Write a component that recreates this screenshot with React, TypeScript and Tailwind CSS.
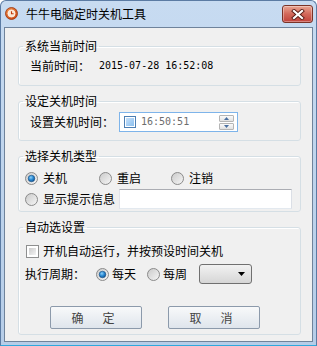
import React from 'react';

const Radio = ({ checked }: { checked?: boolean }) => (
  <svg width="13" height="13" viewBox="0 0 13 13" className="shrink-0">
    <defs>
      <linearGradient id="radioBg" x1="0" y1="0" x2="1" y2="1">
        <stop offset="0" stopColor="#c9c9c9" />
        <stop offset="1" stopColor="#f7f7f7" />
      </linearGradient>
      <radialGradient id="radioDot" cx="0.4" cy="0.35" r="0.7">
        <stop offset="0" stopColor="#8fd0f7" />
        <stop offset="0.5" stopColor="#2a8ad4" />
        <stop offset="1" stopColor="#0d4f8f" />
      </radialGradient>
    </defs>
    <circle cx="6.5" cy="6.5" r="6" fill="url(#radioBg)" stroke="#8a8a8a" strokeWidth="1" />
    {checked && <circle cx="6.5" cy="6.5" r="3.3" fill="url(#radioDot)" stroke="#1a4f82" strokeWidth="0.6" />}
  </svg>
);

const Check = () => (
  <div className="w-[13px] h-[13px] shrink-0 border border-[#8e8f8f] bg-white p-[2px]">
    <div className="w-full h-full bg-gradient-to-br from-[#cbcbcb] to-[#f4f4f4]" />
  </div>
);

const Group = ({ title, children, className }: { title: string; children: React.ReactNode; className?: string }) => (
  <fieldset className={`border border-[#d5dfe5] rounded-[3px] shadow-[inset_1px_1px_0_#ffffff] ${className ?? ''}`}>
    <legend className="ml-[4px] px-[2px] text-[12px] leading-[12px] text-black">{title}</legend>
    {children}
  </fieldset>
);

const WinButton = ({ a, b }: { a: string; b: string }) => (
  <button className="w-[92px] h-[23px] rounded-[2px] border border-[#8c9aab] bg-gradient-to-b from-[#f8f9fa] to-[#dfe5ec] text-[12px] leading-[16px] text-[#444] flex items-center justify-center gap-[19px] pr-[6px]">
    <span>{a}</span>
    <span>{b}</span>
  </button>
);

export default function App() {
  return (
    <div className="w-[317px] h-[346px] flex flex-col bg-gradient-to-b from-[#c7dbf1] to-[#b6cde8] border border-[#5b7ba3] border-b-[#2ea8dd] rounded-t-[6px] overflow-hidden font-['Noto_Sans_CJK_SC','Noto_Sans',sans-serif]">
      {/* title bar */}
      <div className="h-[26px] flex items-start pl-[4px] pr-[3px]">
        <svg width="13" height="13" viewBox="0 0 13 13" className="mt-[6px] shrink-0">
          <defs>
            <radialGradient id="appIco" cx="0.4" cy="0.35" r="0.7">
              <stop offset="0" stopColor="#f7a25a" />
              <stop offset="1" stopColor="#c9420f" />
            </radialGradient>
          </defs>
          <circle cx="6.5" cy="6.5" r="6" fill="url(#appIco)" stroke="#9a3209" strokeWidth="0.8" />
          <circle cx="6.5" cy="6.5" r="3.6" fill="#fbe7d3" stroke="#fff" strokeWidth="0.6" />
          <path d="M6.5 4.2 V6.7 H8.6" fill="none" stroke="#c23a0c" strokeWidth="1.1" />
        </svg>
        <span className="ml-[8px] mt-[6px] text-[12px] leading-[14px] text-black">牛牛电脑定时关机工具</span>
        <div className="ml-auto mt-[4px] w-[31px] h-[18px] rounded-[3px] border border-[#7a3327] bg-gradient-to-b from-[#e9a593] via-[#d2685a] to-[#c1413a] shadow-[inset_0_0_0_1px_rgba(255,255,255,0.35)] flex items-center justify-center">
          <svg width="14" height="11" viewBox="0 0 14 11">
            <path d="M3 2 L11 9 M11 2 L3 9" stroke="#5a1d16" strokeWidth="4" strokeLinecap="square" />
            <path d="M3 2 L11 9 M11 2 L3 9" stroke="#ffffff" strokeWidth="2.2" strokeLinecap="square" />
          </svg>
        </div>
      </div>

      {/* client area */}
      <div className="mx-[3px] mb-[3px] flex-1 bg-[#f0f0f0] border border-[#6f839b] pt-[12px] pl-[13px] pr-[11px] flex flex-col text-[12px] text-black">
        <Group title="系统当前时间">
          <div className="flex items-center h-[16px] mt-[6px] mb-[11px] pl-[11px]">
            <span className="w-[69px] leading-[16px]">当前时间：</span>
            <span className="font-['DejaVu_Sans_Mono',monospace] text-[10px] leading-[16px]">2015-07-28 16:52:08</span>
          </div>
        </Group>

        <Group title="设定关机时间" className="mt-[9px]">
          <div className="flex items-center h-[20px] mt-[5px] mb-[8px] pl-[11px]">
            <span className="w-[89px] leading-[16px]">设置关机时间：</span>
            <div className="w-[119px] h-[20px] border border-[#7eb4ea] bg-white flex items-center pl-[4px] pr-[3px]">
              <div className="w-[12px] h-[12px] border border-[#4d7fb3] p-[1px] bg-white">
                <div className="w-full h-full bg-gradient-to-br from-[#c6e0fa] to-[#8cc0ee]" />
              </div>
              <span className="ml-[5px] font-['DejaVu_Sans_Mono',monospace] text-[10px] leading-[16px] text-[#6d6d6d]">16:50:51</span>
              <div className="ml-auto flex flex-col gap-[1px]">
                <div className="w-[15px] h-[7px] border border-[#b5b5b5] rounded-[1px] bg-gradient-to-b from-[#fbfbfb] to-[#e1e1e1] flex items-center justify-center">
                  <svg width="5" height="3" viewBox="0 0 5 3"><path d="M0 3 L2.5 0 L5 3 Z" fill="#4a6fa0" /></svg>
                </div>
                <div className="w-[15px] h-[7px] border border-[#b5b5b5] rounded-[1px] bg-gradient-to-b from-[#fbfbfb] to-[#e1e1e1] flex items-center justify-center">
                  <svg width="5" height="3" viewBox="0 0 5 3"><path d="M0 0 L5 0 L2.5 3 Z" fill="#4a6fa0" /></svg>
                </div>
              </div>
            </div>
          </div>
        </Group>

        <Group title="选择关机类型" className="mt-[9px]">
          <div className="flex items-center h-[16px] mt-[8px] pl-[6px]">
            <div className="w-[74px] flex items-center gap-[5px]">
              <Radio checked />
              <span className="leading-[16px]">关机</span>
            </div>
            <div className="w-[72px] flex items-center gap-[5px]">
              <Radio />
              <span className="leading-[16px]">重启</span>
            </div>
            <div className="flex items-center gap-[5px]">
              <Radio />
              <span className="leading-[16px]">注销</span>
            </div>
          </div>
          <div className="flex items-center h-[20px] mt-[3px] mb-[2px] pl-[6px]">
            <div className="w-[94px] flex items-center gap-[5px]">
              <Radio />
              <span className="leading-[16px]">显示提示信息</span>
            </div>
            <div className="w-[173px] h-[20px] border border-[#abadb3] border-b-[#e3e9ef] border-l-[#e2e3ea] border-r-[#dbdfe6] bg-white" />
          </div>
        </Group>

        <Group title="自动选设置" className="mt-[9px]">
          <div className="flex items-center h-[16px] mt-[10px] pl-[7px] gap-[4px]">
            <Check />
            <span className="leading-[16px]">开机自动运行，并按预设时间关机</span>
          </div>
          <div className="flex items-center h-[20px] mt-[5px] pl-[6px]">
            <span className="w-[71px] leading-[16px]">执行周期：</span>
            <div className="w-[51px] flex items-center gap-[3px]">
              <Radio checked />
              <span className="leading-[16px]">每天</span>
            </div>
            <div className="w-[52px] flex items-center gap-[3px]">
              <Radio />
              <span className="leading-[16px]">每周</span>
            </div>
            <div className="w-[53px] h-[20px] rounded-[3px] border border-[#707070] bg-gradient-to-b from-[#f2f2f2] to-[#d6d6d6] flex items-center justify-end pr-[6px]">
              <svg width="7" height="4" viewBox="0 0 7 4"><path d="M0 0 L7 0 L3.5 4 Z" fill="#000" /></svg>
            </div>
          </div>
          <div className="flex mt-[22px] mb-[5px] pl-[31px] gap-[26px]">
            <WinButton a="确" b="定" />
            <WinButton a="取" b="消" />
          </div>
        </Group>
      </div>
    </div>
  );
}
